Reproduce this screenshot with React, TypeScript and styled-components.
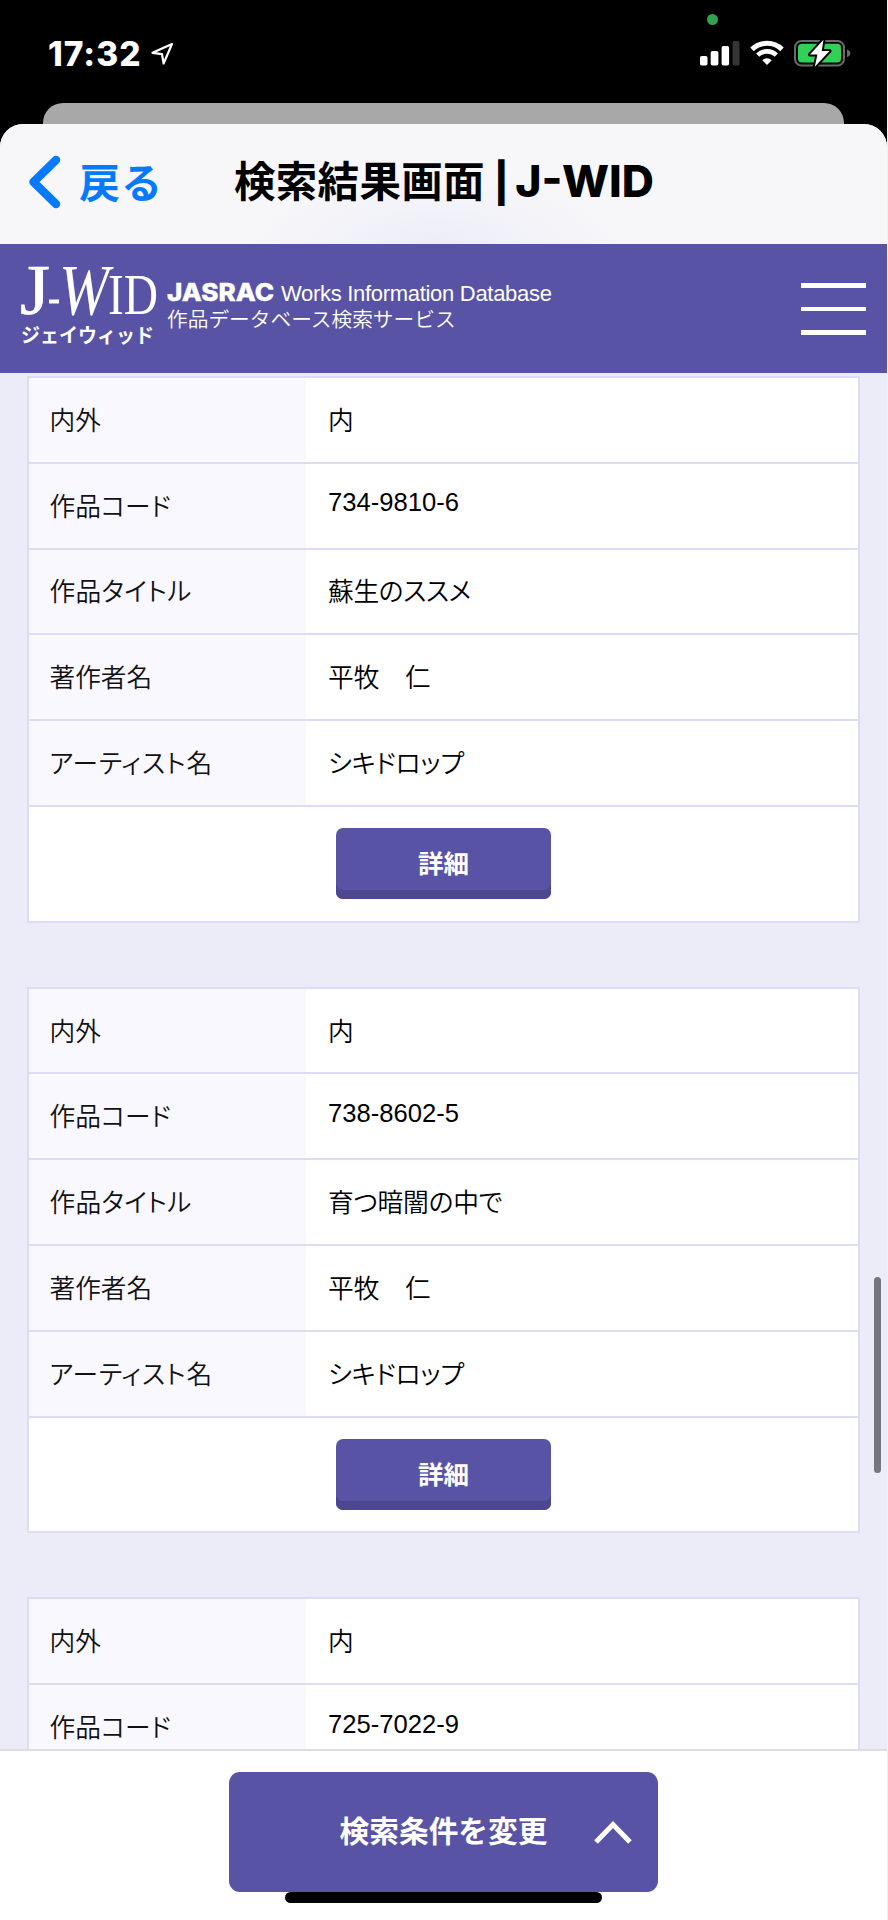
import React from 'react';
import styled, { createGlobalStyle } from 'styled-components';

const purple = '#5953a5';
const line = '#dddbf6';
const jp = "'Noto Sans CJK JP', sans-serif";

const GlobalStyle = createGlobalStyle`
  *, *::before, *::after { box-sizing: border-box; }
  html, body { margin: 0; padding: 0; }
  body { background: #f1f0f8; font-family: ${jp}; color: #111; }
`;

const Screen = styled.div`
  position: relative;
  display: flex;
  flex-direction: column;
  width: 887px;
  height: 1920px;
  overflow: hidden;
  background: #000;
`;

const StatusBar = styled.div`
  flex: none;
  height: 103px;
  display: flex;
  justify-content: space-between;
  padding: 36px 35px 0 48px;
`;

const Clock = styled.div`
  display: flex;
  height: 36px;
  align-items: center;
  gap: 8px;
  color: #fff;
  font: 800 33.5px/36px Inter, sans-serif;
  letter-spacing: 1px;
`;

const Indicators = styled.div`
  display: flex;
  height: 34px;
  align-items: center;
  gap: 10px;
`;

const CameraDot = styled.span`
  position: absolute;
  left: 707px;
  top: 14px;
  width: 11px;
  height: 11px;
  border-radius: 50%;
  background: #2fa150;
`;

const BackSheet = styled.div`
  flex: none;
  height: 21px;
  margin: 0 43px;
  border-radius: 20px 20px 0 0;
  background: #a8a8a8;
`;

const Sheet = styled.main`
  flex: 1;
  min-height: 0;
  display: flex;
  flex-direction: column;
  border-radius: 23px 23px 0 0;
  overflow: hidden;
  background: #ecebf8;
`;

const NavBar = styled.nav`
  flex: none;
  height: 120px;
  display: grid;
  grid-template-columns: 234px 1fr;
  align-items: center;
  padding-bottom: 5px;
  background: radial-gradient(ellipse 190px 70px at 435px 120px, #ededf9, #f7f7f9 100%);
`;

const BackLink = styled.a`
  display: flex;
  align-items: center;
  padding-left: 28px;
  gap: 17px;
  color: #067aff;
  font-size: 41px;
  font-weight: 700;
  line-height: 60px;
  letter-spacing: 1px;
`;

const BackText = styled.span`
  padding-bottom: 4px;
`;

const Title = styled.h1`
  margin: 0;
  padding-bottom: 1px;
  display: flex;
  align-items: baseline;
  white-space: pre;
  color: #000;
  font-size: 41.5px;
  font-weight: 700;
  line-height: 60px;
  letter-spacing: 0.3px;
`;

const Divider = styled.span`
  margin: 0 6px 0 9px;
  font: 800 39px/60px Inter, sans-serif;
`;

const TitleLatin = styled.span`
  font: 800 44.5px/60px Inter, sans-serif;
  letter-spacing: 0;
`;

const SiteHeader = styled.header`
  flex: none;
  height: 129px;
  display: flex;
  align-items: flex-start;
  padding: 17px 21px 0 21px;
  background: ${purple};
  color: #fff;
`;

const Brand = styled.div`
  width: 146px;
  flex: none;
`;

const LogoSvg = styled.svg`
  display: block;
  overflow: visible;
`;

const Tagline = styled.div`
  flex: 1;
  padding-top: 20px;
`;

const TagEn = styled.div`
  display: flex;
  align-items: baseline;
  gap: 7px;
  height: 26px;
  white-space: nowrap;
  font: 400 22px/26px 'Liberation Sans', sans-serif;
  letter-spacing: -0.3px;
`;

const TagJa = styled.div`
  font-size: 20.7px;
  font-weight: 350;
  line-height: 26px;
  margin-top: -2px;
  white-space: nowrap;
`;

const MenuButton = styled.div`
  display: flex;
  flex-direction: column;
  gap: 19px;
  padding-top: 22px;
`;

const MenuLine = styled.span`
  width: 65px;
  height: 4.5px;
  background: #fff;
`;

const Results = styled.section`
  flex: 1;
  min-height: 0;
  overflow: hidden;
  display: flex;
  flex-direction: column;
  gap: 64.2px;
  padding: 3px 27px 0;
`;

const Card = styled.article`
  flex: none;
  height: 546.5px;
  border: 2px solid ${line};
  background: #fff;
`;

const Row = styled.div`
  display: grid;
  grid-template-columns: 276.5px 1fr;
  height: 85.8px;
  border-bottom: 2px solid ${line};
  font-size: 25.7px;
  line-height: 36px;
  font-weight: 350;
  font-feature-settings: 'palt';
`;

const Label = styled.div`
  display: flex;
  align-items: center;
  padding: 0 0 2px 20.5px;
  background: #f9f8ff;
`;

const Value = styled.div<{ $code?: boolean }>`
  display: flex;
  align-items: center;
  padding: 0 0 ${p => (p.$code ? '7px' : '2px')} 22.5px;
  ${p => p.$code && "font-family: 'Liberation Sans', sans-serif; font-size: 25.6px; font-weight: 400;"}
  color: #000;
`;

const Run = styled.span<{ $ls: number }>`
  white-space: pre;
  letter-spacing: ${p => p.$ls}px;
`;

const CardFoot = styled.div`
  display: flex;
  justify-content: center;
  padding-top: 21px;
`;

const DetailButton = styled.button`
  width: 214.5px;
  height: 71px;
  padding: 0 0 3px;
  border: 0;
  border-radius: 7px;
  background: ${purple};
  box-shadow: inset 0 -9px 0 #4d478f;
  color: #fff;
  font: 700 25.5px/36px ${jp};
`;

const BottomBar = styled.footer`
  flex: none;
  height: 171px;
  display: flex;
  flex-direction: column;
  align-items: center;
  padding-top: 21px;
  border-top: 2px solid #dededf;
  background: #fff;
`;

const ChangeButton = styled.button`
  position: relative;
  width: 428.5px;
  height: 120px;
  padding: 0 0 4px;
  border: 0;
  border-radius: 11px;
  background: ${purple};
  color: #fff;
  font: 700 29.7px/40px ${jp};
`;

const ChevronUp = styled.svg`
  position: absolute;
  right: 25px;
  top: 48px;
`;

const HomeIndicator = styled.div`
  width: 317px;
  height: 11px;
  border-radius: 6px;
  background: #000;
`;

const ScrollThumb = styled.div`
  position: absolute;
  left: 874px;
  top: 1277px;
  width: 7px;
  height: 196px;
  border-radius: 4px;
  background: #77767f;
`;

const Logo = () => (
  <LogoSvg width="146" height="86" viewBox="0 0 146 86" fill="#fff">
    <g fontFamily="'Liberation Serif', serif">
      <text x="-1" y="52.5" fontSize="71" textLength="30" lengthAdjust="spacingAndGlyphs" stroke="#fff" strokeWidth="0.7">J</text>
      <rect x="28" y="38.5" width="10" height="4" />
      <text x="38" y="52.5" fontSize="72" fontStyle="italic" textLength="50" lengthAdjust="spacingAndGlyphs">W</text>
      <text x="87" y="52.5" fontSize="58" textLength="50" lengthAdjust="spacingAndGlyphs">ID</text>
    </g>
    <text x="0" y="81.5" fontSize="20" fontWeight="700" fontFamily={jp} textLength="133" lengthAdjust="spacingAndGlyphs">ジェイウィッド</text>
  </LogoSvg>
);

const JasracSvg = styled.svg`
  overflow: visible;
`;

const Jasrac = () => (
  <JasracSvg width="107" height="19" viewBox="0 0 107 19">
    <text x="0" y="19" fill="#fff" stroke="#fff" strokeWidth="0.4" fontSize="24" fontWeight="800" letterSpacing="0" fontFamily="Inter, sans-serif" textLength="107" lengthAdjust="spacingAndGlyphs">JASRAC</text>
  </JasracSvg>
);

const records = [
  { code: '734-9810-6', title: '蘇生のススメ', titleLs: -0.3 },
  { code: '738-8602-5', title: '育つ暗闇の中で', titleLs: -0.15 },
  { code: '725-7022-9', title: '', titleLs: 0 },
];

export default function App() {
  return (
    <>
      <GlobalStyle />
      <Screen>
        <CameraDot />
        <StatusBar>
          <Clock>
            17:32
            <svg width="24" height="24" viewBox="0 0 24 24" fill="none" stroke="#fff" strokeWidth="2.2" strokeLinejoin="round">
              <path d="M22 2 L2.5 10.8 L12 12.2 L13.6 21.5 Z" />
            </svg>
          </Clock>
          <Indicators>
            <svg width="40" height="26" viewBox="0 0 40 26" fill="#fff">
              <rect x="0" y="16" width="7.5" height="9.5" rx="1.8" />
              <rect x="10.7" y="11" width="7.7" height="14.5" rx="1.8" />
              <rect x="21.6" y="6" width="7.5" height="19.5" rx="1.8" />
              <rect x="32.5" y="1" width="7" height="24.5" rx="1.8" fill="#353535" />
            </svg>
            <svg width="34" height="26" viewBox="0 0 34 26" fill="none" stroke="#fff" strokeWidth="5">
              <path d="M2 9.4 A21.5 21.5 0 0 1 32 9.4" />
              <path d="M7.7 15.2 A13.3 13.3 0 0 1 26.3 15.2" strokeWidth="4.6" />
              <path d="M17 25 L12.3 20.3 A6.7 6.7 0 0 1 21.7 20.3 Z" fill="#fff" stroke="none" />
            </svg>
            <svg width="58" height="28" viewBox="0 0 58 28">
              <rect x="1" y="2" width="49" height="24.5" rx="6.5" fill="none" stroke="#6b6b6b" strokeWidth="2" />
              <rect x="4" y="4.8" width="43" height="18.8" rx="4" fill="#31d158" />
              <path d="M53 10.5 v7.6 c2.3-.7 3.3-2 3.3-3.8 s-1-3.1-3.3-3.8z" fill="#6b6b6b" />
              <path d="M29.5 .8 L16 15.6 h7.4 L20.8 27.8 L35.5 12 h-7.8z" fill="#fff" stroke="#000" strokeWidth="4" paintOrder="stroke" strokeLinejoin="round" />
            </svg>
          </Indicators>
        </StatusBar>
        <BackSheet />
        <Sheet>
          <NavBar>
            <BackLink>
              <svg width="34" height="54" viewBox="0 0 34 54" fill="none" stroke="#067aff" strokeWidth="8.5" strokeLinecap="round" strokeLinejoin="round">
                <path d="M28 5 L5.5 27 L28 49" />
              </svg>
              <BackText>戻る</BackText>
            </BackLink>
            <Title>
              検索結果画面<Divider>|</Divider><TitleLatin>J-WID</TitleLatin>
            </Title>
          </NavBar>
          <SiteHeader>
            <Brand><Logo /></Brand>
            <Tagline>
              <TagEn><Jasrac />Works Information Database</TagEn>
              <TagJa>作品データベース検索サービス</TagJa>
            </Tagline>
            <MenuButton><MenuLine /><MenuLine /><MenuLine /></MenuButton>
          </SiteHeader>
          <Results>
            {records.map(r => (
              <Card key={r.code}>
                <Row><Label>内外</Label><Value>内</Value></Row>
                <Row><Label>作品コード</Label><Value $code>{r.code}</Value></Row>
                {r.title && (
                  <>
                    <Row><Label><Run $ls={0.3}>作品タイトル</Run></Label><Value><Run $ls={r.titleLs}>{r.title}</Run></Value></Row>
                    <Row><Label>著作者名</Label><Value>平牧　仁</Value></Row>
                    <Row><Label><Run $ls={0.8}>アーティスト名</Run></Label><Value><Run $ls={-0.2}>シキドロップ</Run></Value></Row>
                    <CardFoot><DetailButton>詳細</DetailButton></CardFoot>
                  </>
                )}
              </Card>
            ))}
          </Results>
          <BottomBar>
            <ChangeButton>
              検索条件を変更
              <ChevronUp width="40" height="26" viewBox="0 0 40 26" fill="none" stroke="#fff" strokeWidth="5">
                <path d="M3 22 L20 4.5 L37 22" />
              </ChevronUp>
            </ChangeButton>
            <HomeIndicator />
          </BottomBar>
        </Sheet>
        <ScrollThumb />
      </Screen>
    </>
  );
}
